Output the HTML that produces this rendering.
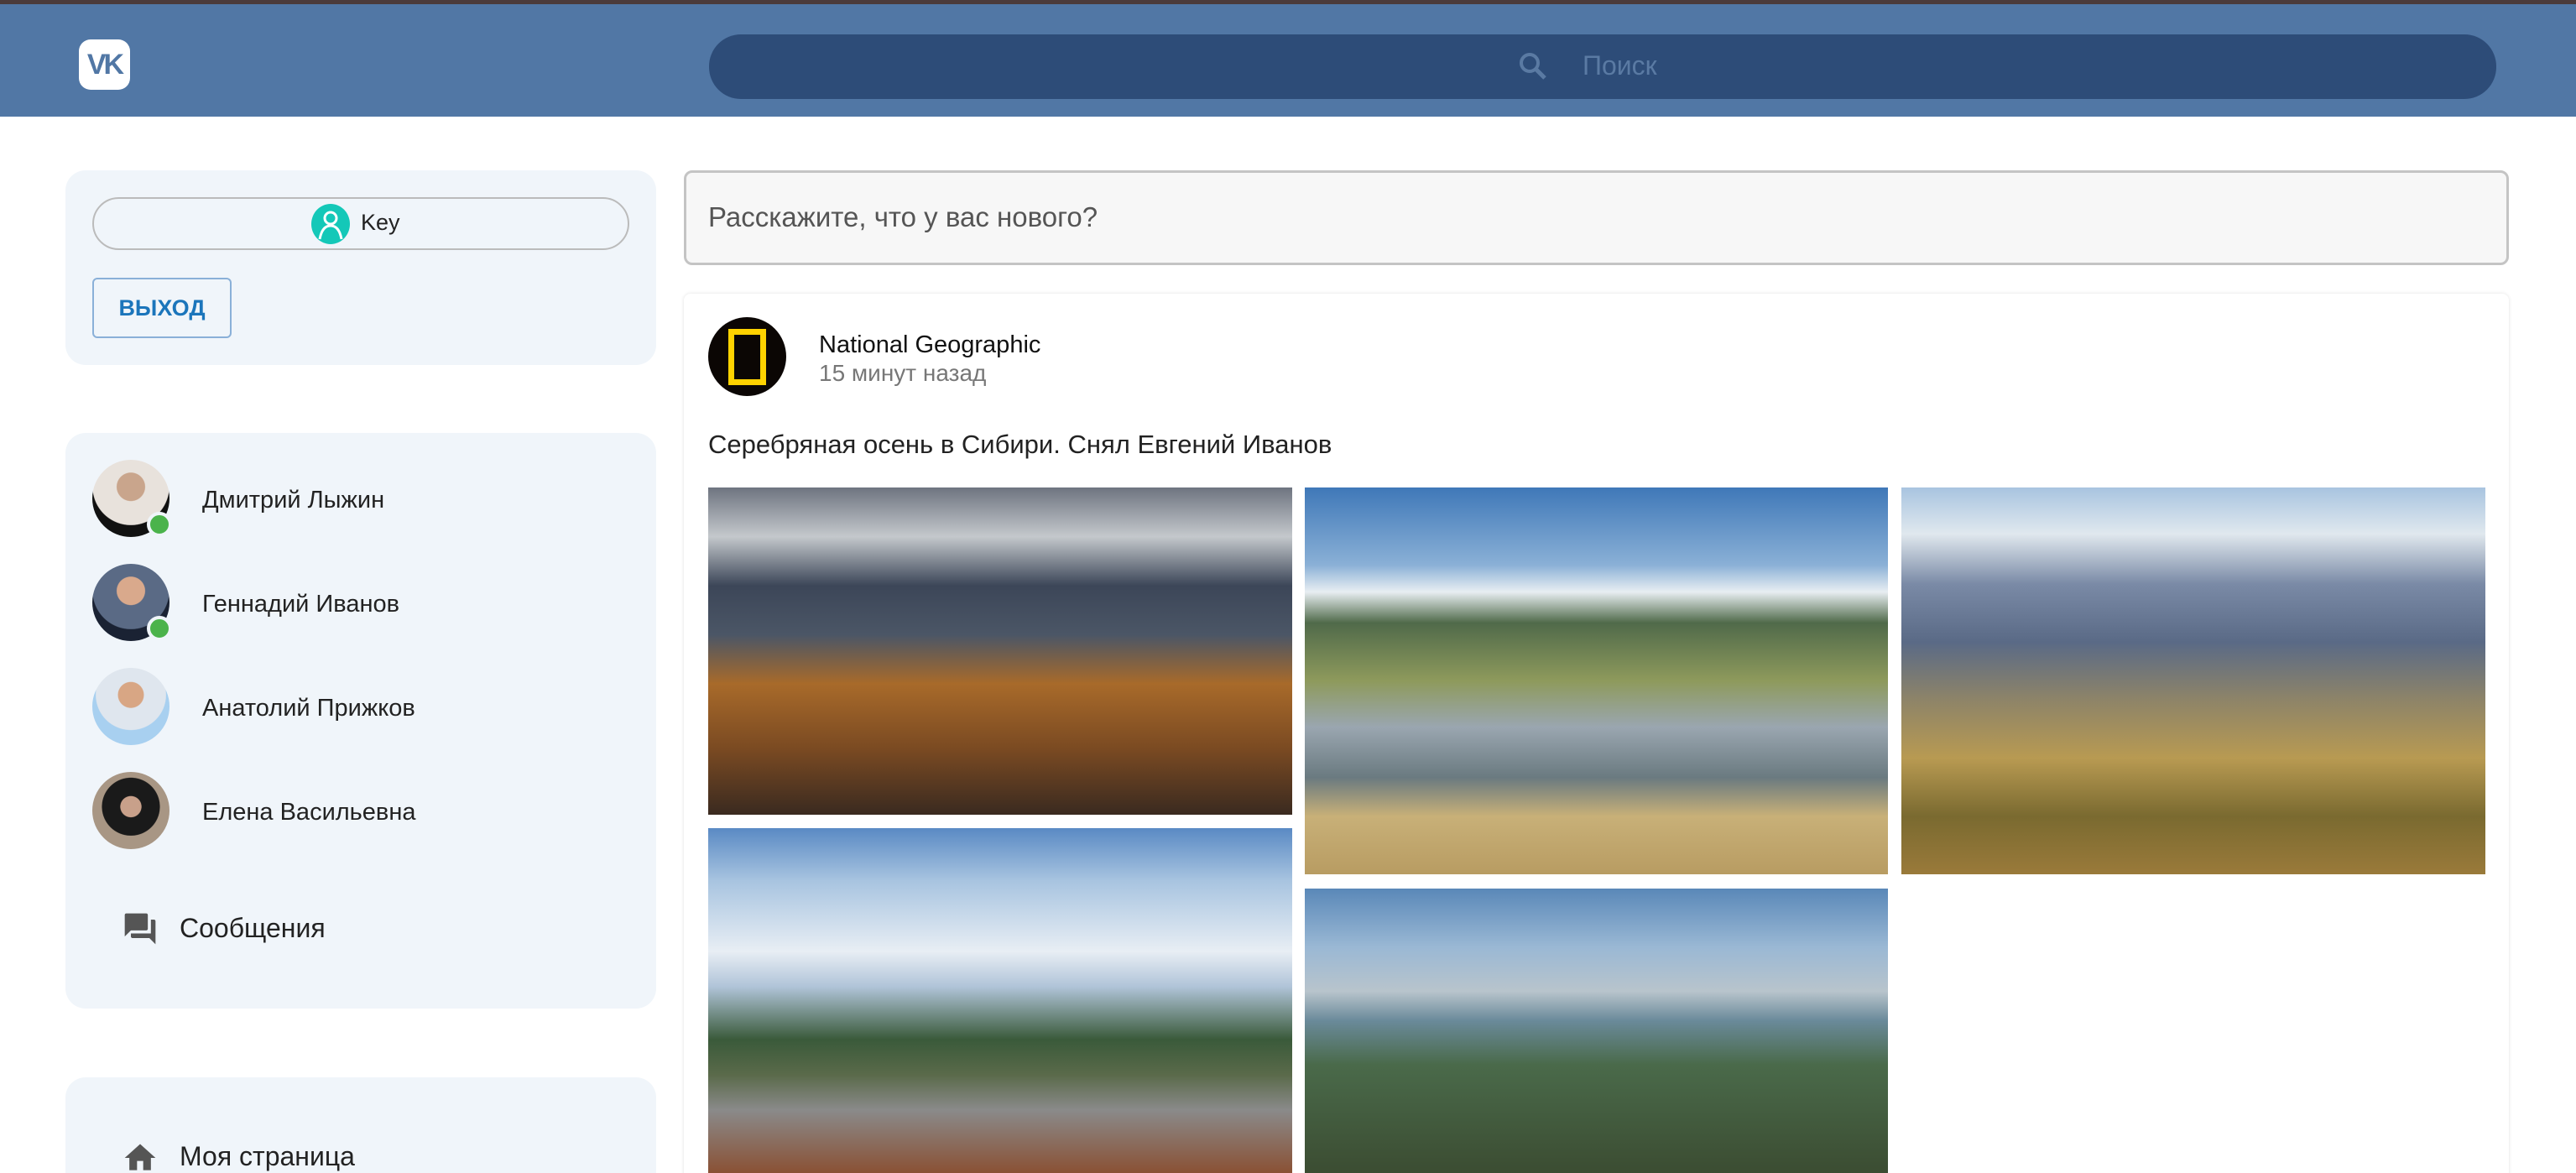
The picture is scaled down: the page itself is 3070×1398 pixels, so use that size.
<!DOCTYPE html>
<html style="width:3070px;height:1398px;overflow:hidden"><head><meta charset="utf-8"><style>
*{box-sizing:border-box;margin:0;padding:0}
html,body{width:3070px;height:1398px;overflow:hidden}
body{background:#fff;font-family:"Liberation Sans","DejaVu Sans",sans-serif;position:relative;color:#111}
.abs{position:absolute}
.hdr{left:0;top:0;width:3070px;height:139px;background:#5177a5;border-top:5px solid #4b3b3b}
.card{background:#f0f5fa;border-radius:24px}
.av{width:92px;height:92px;border-radius:50%}
.dot{width:30px;height:30px;border-radius:50%;background:#4bb34b;border:4px solid #f0f5fa}
.name{font-size:29px;color:#222}
.img{overflow:hidden}
</style></head><body>
<div class="abs hdr"></div>
<div class="abs" style="left:94px;top:47px;width:61px;height:60px;background:#fff;border-radius:14px;color:#5177a5;font-weight:bold;font-size:34px;text-align:center;line-height:60px;letter-spacing:-3px">VK</div>
<div class="abs" style="left:845px;top:41px;width:2130px;height:77px;background:#2d4c78;border-radius:38px"></div>
<svg class="abs" style="left:1808px;top:60px" width="38" height="38" viewBox="0 0 38 38"><circle cx="15" cy="15" r="10" fill="none" stroke="#5a7aa3" stroke-width="4"/><line x1="22" y1="22" x2="33" y2="33" stroke="#5a7aa3" stroke-width="5"/></svg>
<div class="abs" style="left:1886px;top:60px;font-size:32px;color:#5a7aa3">Поиск</div>

<div class="abs card" style="left:78px;top:203px;width:704px;height:232px"></div>
<div class="abs" style="left:110px;top:235px;width:640px;height:63px;border:2px solid #bbb;border-radius:32px"></div>
<div class="abs" style="left:371px;top:243px;width:46px;height:48px;border-radius:50%;background:#14c8b8"></div>
<svg class="abs" style="left:371px;top:243px" width="46" height="48" viewBox="0 0 46 48"><circle cx="23" cy="17" r="7" fill="none" stroke="#fff" stroke-width="3"/><path d="M10 42 Q13 26 23 26 Q33 26 36 42" fill="none" stroke="#fff" stroke-width="3"/></svg>
<div class="abs" style="left:430px;top:250px;font-size:27px;color:#222">Key</div>
<div class="abs" style="left:110px;top:331px;width:166px;height:72px;border:2px solid #8ab0d8;border-radius:6px;color:#1b75bb;font-size:27px;font-weight:bold;text-align:center;line-height:68px">ВЫХОД</div>

<div class="abs card" style="left:78px;top:516px;width:704px;height:686px"></div>
<div class="abs av" style="left:110px;top:548px;background:radial-gradient(circle at 50% 35%,#c9a58c 0 22%,#e8e2dc 23% 60%,#111 61%)"></div>
<div class="abs dot" style="left:175px;top:610px"></div>
<div class="abs name" style="left:241px;top:580px">Дмитрий Лыжин</div>
<div class="abs av" style="left:110px;top:672px;background:radial-gradient(circle at 50% 35%,#d9a98c 0 22%,#5a6a85 23% 60%,#1a2233 61%)"></div>
<div class="abs dot" style="left:175px;top:734px"></div>
<div class="abs name" style="left:241px;top:704px">Геннадий Иванов</div>
<div class="abs av" style="left:110px;top:796px;background:radial-gradient(circle at 50% 35%,#d8a684 0 20%,#dfe6ee 21% 55%,#a8d0f0 56%)"></div>
<div class="abs name" style="left:241px;top:828px">Анатолий Прижков</div>
<div class="abs av" style="left:110px;top:920px;background:radial-gradient(circle at 50% 45%,#c8a08a 0 18%,#1a1a1a 19% 50%,#a89684 51%)"></div>
<div class="abs name" style="left:241px;top:952px">Елена Васильевна</div>
<svg class="abs" style="left:145px;top:1085px" width="44" height="44" viewBox="0 0 24 24"><path fill="#555" d="M21 6h-2v9H6v2c0 .55.45 1 1 1h11l4 4V7c0-.55-.45-1-1-1zm-4 6V3c0-.55-.45-1-1-1H3c-.55 0-1 .45-1 1v14l4-4h10c.55 0 1-.45 1-1z"/></svg>
<div class="abs" style="left:214px;top:1088px;font-size:32px;color:#222">Сообщения</div>

<div class="abs card" style="left:78px;top:1284px;width:704px;height:200px"></div>
<svg class="abs" style="left:145px;top:1358px" width="44" height="44" viewBox="0 0 24 24"><path fill="#555" d="M10 20v-6h4v6h5v-8h3L12 3 2 12h3v8z"/></svg>
<div class="abs" style="left:214px;top:1360px;font-size:32px;color:#222">Моя страница</div>

<div class="abs" style="left:815px;top:203px;width:2175px;height:113px;border:3px solid #c4c4c4;border-radius:10px;background:#f7f7f7"></div>
<div class="abs" style="left:844px;top:240px;font-size:33px;color:#555">Расскажите, что у вас нового?</div>

<div class="abs" style="left:815px;top:350px;width:2175px;height:1100px;background:#fff;border-radius:8px;box-shadow:0 0 4px rgba(0,0,0,.12)"></div>
<div class="abs" style="left:844px;top:378px;width:93px;height:94px;border-radius:50%;background:#0b0604"></div>
<div class="abs" style="left:868px;top:392px;width:45px;height:67px;border:7px solid #ffd200"></div>
<div class="abs" style="left:976px;top:395px;font-size:29px;color:#111">National Geographic</div>
<div class="abs" style="left:976px;top:429px;font-size:28px;color:#777">15 минут назад</div>
<div class="abs" style="left:844px;top:512px;font-size:31px;color:#222">Серебряная осень в Сибири. Снял Евгений Иванов</div>

<div class="abs img" style="left:844px;top:581px;width:696px;height:390px;background:linear-gradient(180deg,#6e7480 0%,#c4c8cc 15%,#3c4658 30%,#4b5666 45%,#a86a2a 60%,#7a4a22 80%,#3a2a20 100%)"></div>
<div class="abs img" style="left:1555px;top:581px;width:695px;height:461px;background:linear-gradient(180deg,#3f78b8 0%,#8ab0d6 20%,#e8eef2 27%,#506a4a 35%,#8e9a5c 50%,#9aa6b0 62%,#6a7a80 75%,#c8b078 85%,#b89c62 100%)"></div>
<div class="abs img" style="left:2266px;top:581px;width:696px;height:461px;background:linear-gradient(180deg,#a8c4e0 0%,#e0e8ee 12%,#7a8aa6 25%,#5a6a86 40%,#8e8468 55%,#b89a52 70%,#7a6a30 85%,#9a7a3a 100%)"></div>
<div class="abs img" style="left:844px;top:987px;width:696px;height:420px;background:linear-gradient(180deg,#5a8ac4 0%,#a8c4e0 15%,#e8eef4 35%,#b0c4d8 45%,#3a5a3a 60%,#5a6a4a 70%,#8a8a8a 80%,#8a4a2a 100%)"></div>
<div class="abs img" style="left:1555px;top:1059px;width:695px;height:350px;background:linear-gradient(180deg,#5a88b8 0%,#9ab8d4 20%,#b8c4cc 35%,#6a8a9a 45%,#4a6a4a 60%,#3a4a30 100%)"></div>
</body></html>
